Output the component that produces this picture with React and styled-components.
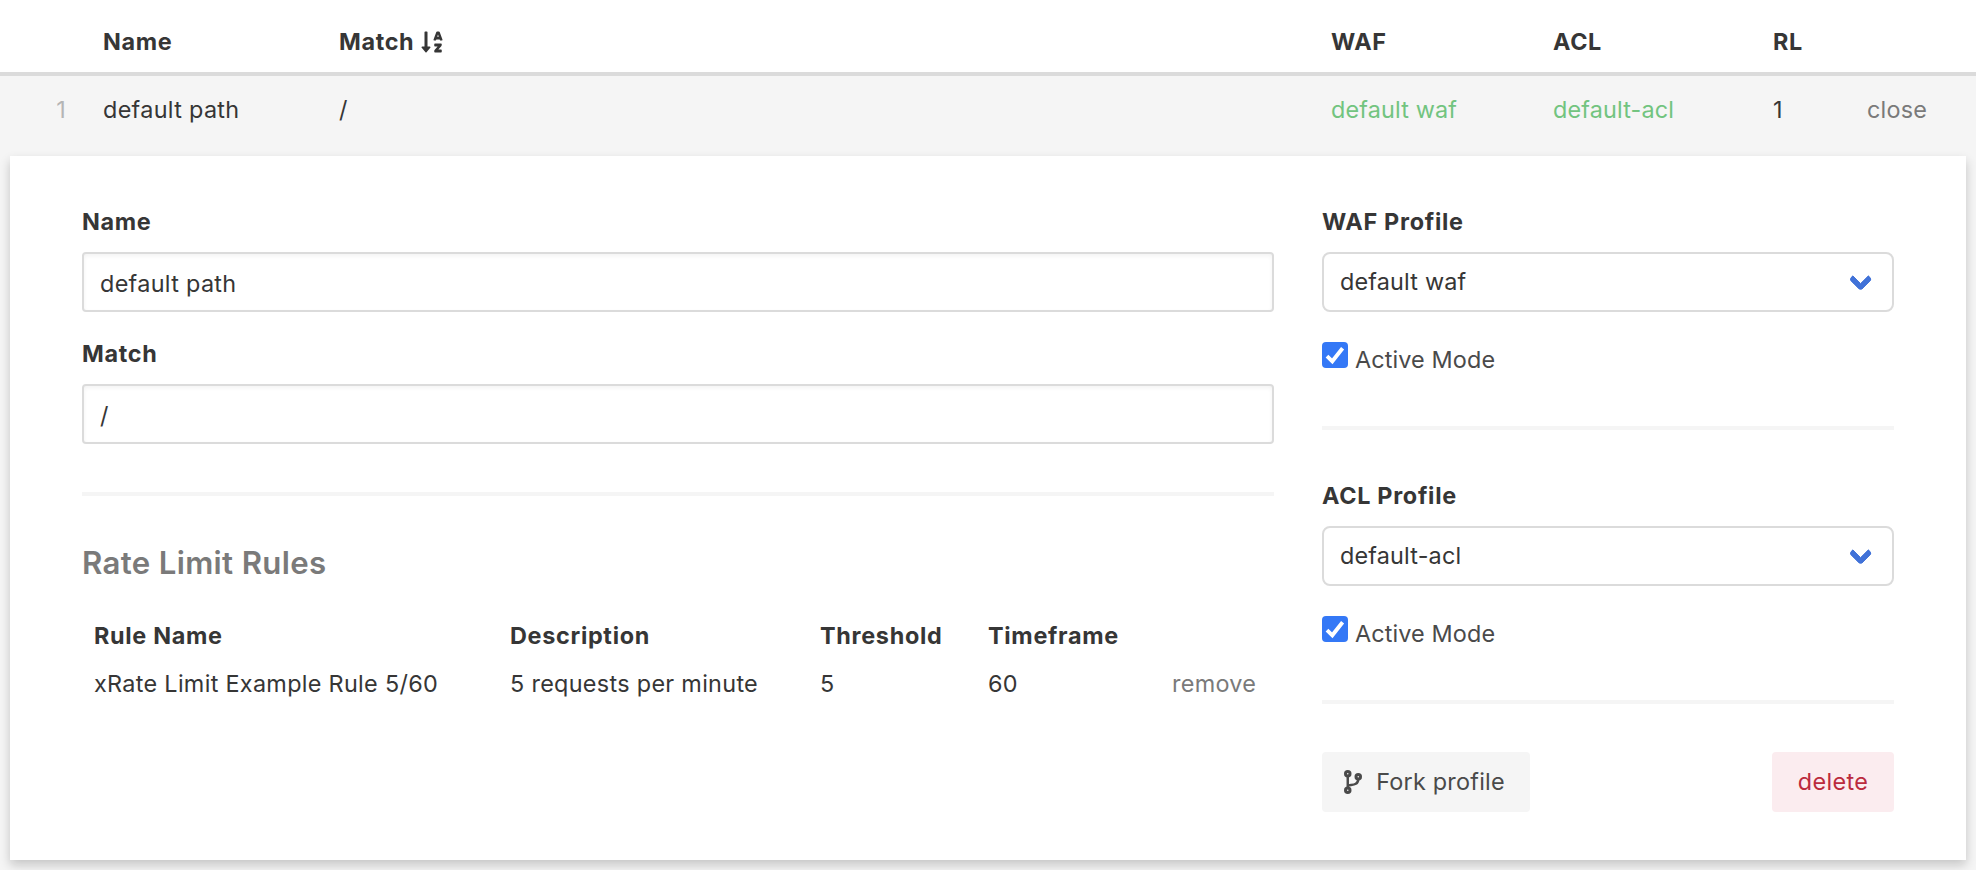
import React, { useState } from "react";
import styled, { createGlobalStyle } from "styled-components";
import { FaSortAlphaDown } from "react-icons/fa";

const GlobalStyle = createGlobalStyle`
  *, *::before, *::after { box-sizing: border-box; }
  body {
    margin: 0;
    overflow: hidden;
    background: #fff;
    color: #363636;
    font: 400 23.4px/36px Inter, "Open Sans", sans-serif;
    letter-spacing: 0.32px;
    -webkit-font-smoothing: antialiased;
  }
  button, input { font: inherit; letter-spacing: inherit; color: inherit; }
`;

const Page = styled.main`
  height: 870px;
  display: flex;
  flex-direction: column;
`;

const PathRow = styled.div`
  display: grid;
  grid-template-columns: 103px 236px 992px 222px 220px 93px 1fr;
  align-items: start;
`;

const HeaderRow = styled(PathRow)`
  height: 76px;
  padding-top: 24px;
  border-bottom: 4px solid #dbdbdb;
  font-weight: 700;
  letter-spacing: 0.65px;
`;

const Expanded = styled.section`
  flex: 1;
  background: #f5f5f5;
  padding: 0 10px 10px;
`;

const SummaryRow = styled(PathRow)`
  height: 80px;
  margin: 0 -10px;
  padding-top: 16px;
`;

const HeaderCell = styled.div`
  display: flex;
  align-items: center;
  gap: 5.5px;
`;

const Index = styled.div`
  padding-right: 37px;
  text-align: right;
  color: #b5b5b5;
`;

const Green = styled.div`
  color: #72c47f;
  letter-spacing: 0.16px;
`;

const TextLink = styled.a`
  color: #7a7a7a;
`;

const CloseLink = styled(TextLink)`
  padding-left: 1px;
  letter-spacing: 0.2px;
`;

const Card = styled.div`
  height: 704px;
  padding: 48px 72px;
  display: grid;
  grid-template-columns: 1192px 572px;
  column-gap: 48px;
  background: #fff;
  box-shadow: 0 5px 10px rgba(10, 10, 10, 0.2);
`;

const Label = styled.label`
  display: block;
  height: 48px;
  font-weight: 700;
  letter-spacing: 0.7px;
`;

const Input = styled.input`
  display: block;
  width: 100%;
  height: 60px;
  margin-bottom: ${(p) => (p.$last ? 0 : 24)}px;
  padding: 3px 16px 0;
  border: 2px solid #dbdbdb;
  border-radius: 4px;
  background: #fff;
  box-shadow: inset 0 2px 4px rgba(10, 10, 10, 0.05);
  outline: 0;
`;

const Divider = styled.hr`
  height: 4px;
  margin: 48px 0;
  border: 0;
  background: #f5f5f5;
`;

const Heading = styled.h2`
  margin: 0 0 30px;
  font-size: 31.2px;
  font-weight: 600;
  line-height: 38px;
  letter-spacing: 0.33px;
  color: #7a7a7a;
`;

const RuleRow = styled.div`
  display: grid;
  grid-template-columns: 416px 310px 168px 184px 1fr;
  height: 48px;
  padding: 6px 0 6px 12px;
  font-weight: ${(p) => (p.$head ? 700 : 400)};
  letter-spacing: ${(p) => (p.$head ? 0.7 : 0.31)}px;
`;

const SelectBox = styled.div`
  display: flex;
  align-items: center;
  justify-content: space-between;
  height: 60px;
  padding: 0 23.5px 0 16px;
  border: 2px solid #dbdbdb;
  border-radius: 8px;
  letter-spacing: 0.18px;
`;

const Chevron = styled.span`
  width: 16.5px;
  height: 16.5px;
  margin-top: -6px;
  border: 6px solid #4172d8;
  border-top: 0;
  border-right: 0;
  border-radius: 4px;
  transform: rotate(-45deg);
`;

const CheckLine = styled.label`
  display: flex;
  align-items: flex-start;
  gap: 7px;
  height: 36px;
  margin-top: 30px;
  color: #4a4a4a;
  letter-spacing: 0.12px;

  input { position: absolute; opacity: 0; width: 0; height: 0; margin: 0; }
`;

const CheckIcon = styled.svg`
  width: 26px;
  height: 26px;
  border-radius: 4px;
  background: ${(p) => (p.$on ? "#3478f6" : "#dbdbdb")};
`;

const Actions = styled.div`
  display: flex;
  justify-content: space-between;
`;

const Button = styled.button`
  display: flex;
  align-items: center;
  justify-content: center;
  gap: 14px;
  width: ${(p) => p.$width}px;
  height: 60px;
  padding: 0 3px 0 0;
  border: 0;
  border-radius: 4px;
  background: ${(p) => (p.$danger ? "#fbecef" : "#f5f5f5")};
  color: ${(p) => (p.$danger ? "#bb2a3d" : "#4a4a4a")};
  letter-spacing: 0.22px;
`;

const DeleteButton = styled(Button)`
  padding: 0;
  letter-spacing: 0.35px;
`;

const BranchIcon = () => (
  <svg width="18" height="24" viewBox="0 0 384 512" fill="none" stroke="currentColor" strokeWidth="64">
    <circle cx="80" cy="80" r="48" />
    <circle cx="80" cy="432" r="48" />
    <circle cx="304" cy="144" r="48" />
    <path d="M80 124V388M80 344C112 300 304 356 304 190" strokeWidth="52" />
  </svg>
);

function ProfileSection({ title, value }) {
  const [active, setActive] = useState(true);
  return (
    <>
      <Label as="div">{title}</Label>
      <SelectBox>
        {value}
        <Chevron />
      </SelectBox>
      <CheckLine>
        <input type="checkbox" checked={active} onChange={() => setActive(!active)} />
        <CheckIcon $on={active} viewBox="0 0 26 26" fill="none">
          {active && <path d="M5 14.2 10.3 19.3 20.6 6.3" stroke="#fff" strokeWidth="3.9" />}
        </CheckIcon>
        <span>Active Mode</span>
      </CheckLine>
      <Divider />
    </>
  );
}

export default function App() {
  return (
    <Page>
      <GlobalStyle />
      <HeaderRow>
        <div />
        <HeaderCell>Name</HeaderCell>
        <HeaderCell>
          Match <FaSortAlphaDown size={24} />
        </HeaderCell>
        <HeaderCell>WAF</HeaderCell>
        <HeaderCell>ACL</HeaderCell>
        <HeaderCell>RL</HeaderCell>
      </HeaderRow>
      <Expanded>
        <SummaryRow>
          <Index>1</Index>
          <div>default path</div>
          <div>/</div>
          <Green>default waf</Green>
          <Green>default-acl</Green>
          <div>1</div>
          <CloseLink>close</CloseLink>
        </SummaryRow>
        <Card>
          <div>
            <Label>Name</Label>
            <Input defaultValue="default path" />
            <Label>Match</Label>
            <Input $last defaultValue="/" />
            <Divider />
            <Heading>Rate Limit Rules</Heading>
            <RuleRow $head>
              <div>Rule Name</div>
              <div>Description</div>
              <div>Threshold</div>
              <div>Timeframe</div>
            </RuleRow>
            <RuleRow>
              <div>xRate Limit Example Rule 5/60</div>
              <div>5 requests per minute</div>
              <div>5</div>
              <div>60</div>
              <TextLink>remove</TextLink>
            </RuleRow>
          </div>
          <div>
            <ProfileSection title="WAF Profile" value="default waf" />
            <ProfileSection title="ACL Profile" value="default-acl" />
            <Actions>
              <Button $width={208}>
                <BranchIcon />
                Fork profile
              </Button>
              <DeleteButton $danger $width={122}>delete</DeleteButton>
            </Actions>
          </div>
        </Card>
      </Expanded>
    </Page>
  );
}
